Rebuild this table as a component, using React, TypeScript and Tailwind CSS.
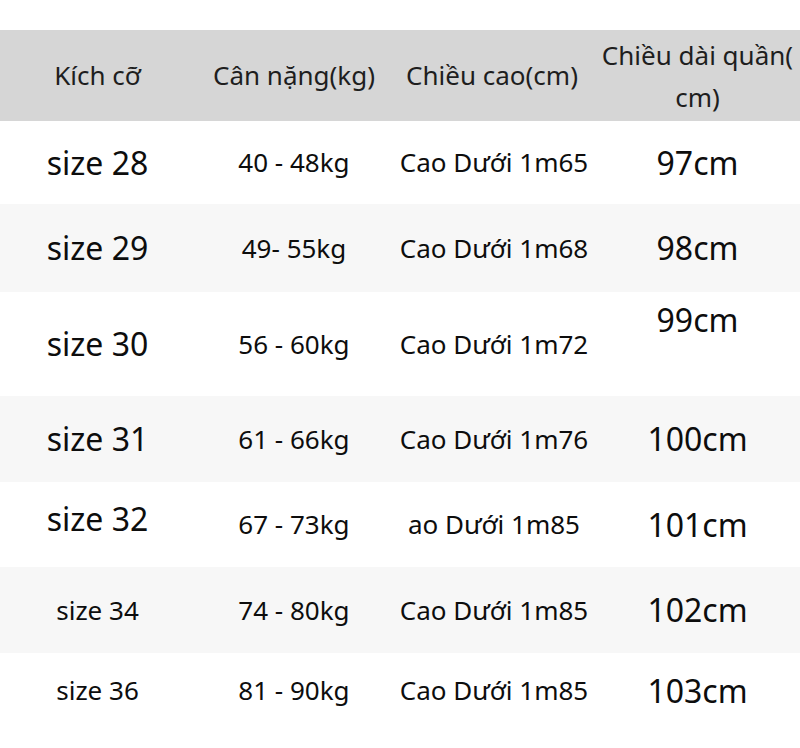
const rows = [
  { size: "size 28", sizeCls: "text-[32px]", kg: "40 - 48kg", h: "Cao Dưới 1m65", len: "97cm", rowCls: "h-[83px] bg-white", lenCls: "" },
  { size: "size 29", sizeCls: "text-[32px]", kg: "49- 55kg", h: "Cao Dưới 1m68", len: "98cm", rowCls: "h-[88px] bg-[#f7f7f7]", lenCls: "" },
  { size: "size 30", sizeCls: "text-[32px]", kg: "56 - 60kg", h: "Cao Dưới 1m72", len: "99cm", rowCls: "h-[104px] bg-white", lenCls: "self-start pt-[4px]" },
  { size: "size 31", sizeCls: "text-[32px]", kg: "61 - 66kg", h: "Cao Dưới 1m76", len: "100cm", rowCls: "h-[86px] bg-[#f7f7f7]", lenCls: "" },
  { size: "size 32", sizeCls: "text-[32px] pb-[12px]", kg: "67 - 73kg", h: "ao Dưới 1m85", len: "101cm", rowCls: "h-[85px] bg-white", lenCls: "" },
  { size: "size 34", sizeCls: "text-[26px]", kg: "74 - 80kg", h: "Cao Dưới 1m85", len: "102cm", rowCls: "h-[86px] bg-[#f7f7f7]", lenCls: "" },
  { size: "size 36", sizeCls: "text-[26px]", kg: "81 - 90kg", h: "Cao Dưới 1m85", len: "103cm", rowCls: "h-[95px] bg-white pb-[20px]", lenCls: "" },
];

const cols = "grid grid-cols-[195px_198px_202px_205px]";

export default function App() {
  return (
    <div className="w-[800px] h-[748px] overflow-hidden bg-white pt-[30px] text-[#0d0d0d] font-['Noto_Sans',sans-serif]">
      <div className={`${cols} h-[91px] bg-[#d6d6d6] text-[#1e1e1e] text-[26px]`}>
        <div className="flex items-center justify-center">Kích cỡ</div>
        <div className="flex items-center justify-center">Cân nặng(kg)</div>
        <div className="flex items-center justify-center pr-[4px]">Chiều cao(cm)</div>
        <div className="flex items-center justify-center text-center leading-[42px] whitespace-nowrap">
          Chiều dài quần(
          <br />
          cm)
        </div>
      </div>
      {rows.map((r) => (
        <div key={r.size} className={`${cols} ${r.rowCls}`}>
          <div className={`flex items-center justify-center ${r.sizeCls}`}>{r.size}</div>
          <div className="flex items-center justify-center text-[26px]">{r.kg}</div>
          <div className="flex items-center justify-center text-[26px]">{r.h}</div>
          <div className={`flex items-center justify-center text-[32px] ${r.lenCls}`}>{r.len}</div>
        </div>
      ))}
    </div>
  );
}
